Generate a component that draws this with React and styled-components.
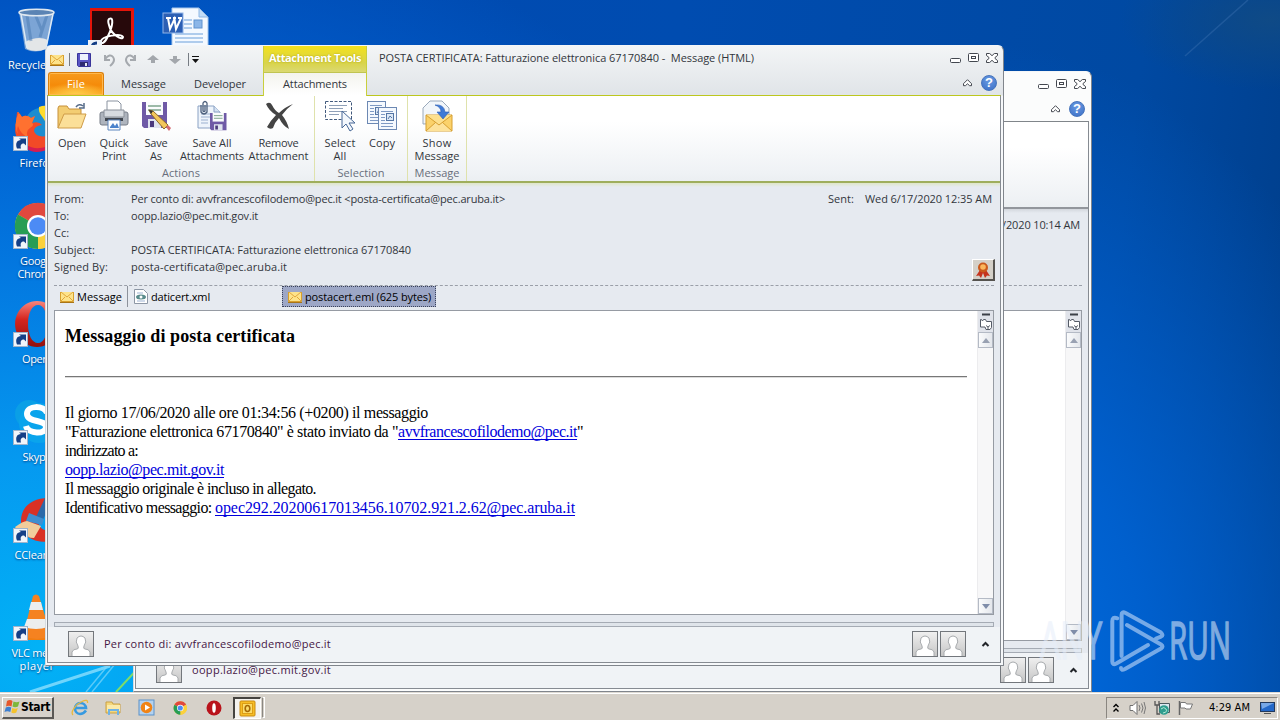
import React, { useLayoutEffect, useRef, useState } from "react";
import styled, { createGlobalStyle, css } from "styled-components";

const ui = `"Open Sans", "Noto Sans", sans-serif`;
const tahoma = `"DejaVu Sans Condensed", "DejaVu Sans", sans-serif`;

const GlobalStyle = createGlobalStyle`
  * { box-sizing: border-box; }
  body { margin: 0; overflow: hidden; font-family: ${ui}; font-size: 11px; color: #32363c; }
  svg { display: block; flex: none; }
`;

/* spreads the letters so that a label takes exactly w pixels */
const FitSpan = styled.span`
    display: inline-block;
    white-space: pre;
`;

const Fit = ({ w, children }) => {
    const ref = useRef(null);
    const [spacing, setSpacing] = useState(0);
    useLayoutEffect(() => {
        const natural = ref.current.getBoundingClientRect().width;
        setSpacing((w - natural) / children.length);
    }, [w, children]);
    return <FitSpan ref={ref} style={{ letterSpacing: `${spacing}px` }}>{children}</FitSpan>;
};

/* ---------- desktop ---------- */

const Desktop = styled.div`
    position: relative;
    width: 1280px;
    height: 720px;
    overflow: hidden;
    display: flex;
    flex-direction: column;
    background:
        radial-gradient(ellipse 900px 760px at 40px 650px, #02b2f6 0%, #0599f0 25%, #0378e0 50%, rgba(0, 98, 212, 0.85) 72%, rgba(0, 80, 180, 0) 100%),
        radial-gradient(ellipse 480px 640px at 960px 680px, #006ee2 0%, rgba(0, 100, 214, 0.85) 40%, rgba(0, 80, 180, 0) 100%),
        radial-gradient(ellipse 150px 70px at 1270px 20px, #0f4a86, rgba(10, 70, 140, 0)),
        linear-gradient(97deg, #0049b4 0%, #004cb0 50%, #0049a2 84%, #003d88 100%);
`;

const Streaks = styled.svg`
    position: absolute;
    left: ${(p) => p.$x}px;
    top: ${(p) => p.$y}px;
`;

const IconGrid = styled.div`
    flex: 1;
    min-height: 0;
    display: grid;
    grid-auto-flow: column;
    grid-template-rows: repeat(7, 98px);
    grid-auto-columns: 74px;
    padding-top: 6px;
`;

const Shortcut = styled.div`
    display: flex;
    flex-direction: column;
    align-items: center;
    grid-column: ${(p) => p.$col || 1};
    color: #fff;
    line-height: 13px;
    text-align: center;
    text-shadow: 0 1px 2px #003a80;
    white-space: pre;
    > span { margin-top: 4px; }
`;

const Arrow = () => (
    <g>
        <rect x="0.5" y="32.5" width="14" height="14" fill="#f1f5fa" stroke="#9fb4cc" />
        <path d="M4 44.500c-2-5 0-8.500 4-8.500L6 34.500h7v7L11 39.500c-3 0-4 2-3 5z" fill="#153f86" />
    </g>
);

const BinIcon = () => (
    <svg width="48" height="48" viewBox="0 0 48 48">
        <path d="M6 6l6 37q10 5 21 0l8-37z" fill="#a5bfda" opacity=".75" />
        <path d="M12 36l2 7q9 4 19 0l2-9q-10-5-23 2z" fill="#e3e6e8" />
        <path d="M14 9l4 26M34 9l-7 22M22 8l7 17" stroke="#4476af" strokeWidth="3" opacity=".45" />
        <path d="M8 8l6 34M40 8l-7 34" stroke="#dce9f5" strokeWidth="1.5" fill="none" />
        <ellipse cx="23.500" cy="6.500" rx="17.500" ry="3.300" fill="#5b84b4" stroke="#dfe8f0" strokeWidth="1.500" />
    </svg>
);

const FirefoxIcon = () => (
    <svg width="48" height="48" viewBox="0 0 48 48">
        <circle cx="28" cy="20" r="16" fill="#1b8dd0" />
        <path d="M26 3c12-5 22 6 22 20H34C32 12 25 12 26 3z" fill="#ffdc2c" />
        <path d="M4 8q3 1 5 5 4-3 9 1l4-2-3 7q7-2 10 2-8 1-8 6 2 7 13 5l14-8c0 15-10 23-23 23C9 47-1 33 3 19z" fill="#f24a27" />
        <path d="M4 8q3 1 5 5 4-3 9 1l4-2-3 7q3 2-2 5-5 3-2 9-7-2-10-11-2 5 1 11-7-12 0-25z" fill="#ff7130" />
        <path d="M6 32c5 13 23 17 36 5-6 13-31 18-36-5z" fill="#d51d52" />
        <Arrow />
    </svg>
);

const ChromeIcon = ({ size = 48, arrow = true }) => (
    <svg width={size} height={size} viewBox="0 0 48 48">
        <circle cx="25" cy="24" r="23" fill="#fbd13c" />
        <path d="M25 24L5 12.500A23 23 0 0 1 45 12.500z" fill="#e0483e" />
        <path d="M25 24L5 12.500A23 23 0 0 0 25 47L36 28z" fill="#279d55" />
        <path d="M25 24l20-11.500A23 23 0 0 1 25 47z" fill="#fbd13c" />
        <circle cx="25" cy="24" r="11" fill="#fff" />
        <circle cx="25" cy="24" r="8.800" fill="#4c8bf5" />
        {arrow && <Arrow />}
    </svg>
);

const OperaIcon = () => (
    <svg width="48" height="48" viewBox="0 0 48 48">
        <defs>
            <linearGradient id="op" x1="0" y1="0" x2="0" y2="1">
                <stop offset="0" stopColor="#f8867c" /><stop offset=".4" stopColor="#d5251f" /><stop offset="1" stopColor="#92100e" />
            </linearGradient>
        </defs>
        <path fillRule="evenodd" d="M24 1a22 23 0 1 0 .1 0zM25 5c6 0 9 8 9 19s-3 19-9 19-10-8-10-19S19 5 25 5z" fill="url(#op)" />
        <Arrow />
    </svg>
);

const SkypeIcon = () => (
    <svg width="48" height="48" viewBox="0 0 48 48">
        <circle cx="16" cy="16" r="14" fill="#0a9fe6" />
        <circle cx="26" cy="25" r="20" fill="#0aa4ec" />
        <path d="M34 15c-3-8-20-8-20 1 0 9 19 5 19 13 0 8-18 7-20-1" fill="none" stroke="#fff" strokeWidth="6" />
        <Arrow />
    </svg>
);

const CCleanerIcon = () => (
    <svg width="48" height="48" viewBox="0 0 48 48">
        <path d="M46 3C22-1 8 9 8 25s14 25 40 19V33c-12 4-23 2-23-9s10-13 21-9z" fill="#d93125" />
        <path d="M33 0L22 23l7 3L40 2z" fill="#2c69a8" />
        <path d="M16 17l15 6-2 6-16-4z" fill="#3f8fd0" />
        <path d="M2 31q8-6 12-6l14 5-7 12q-8 0-6-4-6 1-5-2-5 0-8-5z" fill="#f1cd9b" />
        <Arrow />
    </svg>
);

const VlcIcon = () => (
    <svg width="48" height="48" viewBox="0 0 48 48">
        <path d="M8 34h32l4 12H12z" fill="#f07e12" />
        <path d="M20 2q3-3 6 0l12 40q-14 6-28 0z" fill="#f58220" />
        <path d="M18 8h10l2 8H16zM14 25h19l2 8q-12 4-24 0z" fill="#eceeee" />
        <Arrow />
    </svg>
);

const AcrobatIcon = () => (
    <svg width="48" height="48" viewBox="0 0 48 48">
        <rect x="3" y="2" width="44" height="46" fill="#e4140a" />
        <rect x="5" y="5" width="39" height="43" fill="#27090b" />
        <path d="M22 13c5-3 4 7-1 17-3 7-7 9-7 5 1-5 20-8 22-4 0 4-12-2-14-12-1-3-1-5 0-6z" fill="none" stroke="#fff" strokeWidth="2" />
        <rect x="1" y="34" width="14" height="14" fill="#eef3f9" />
        <path d="M5 45c-1-5 1-8 5-8" stroke="#153f86" strokeWidth="3" fill="none" />
    </svg>
);

const WordIcon = () => (
    <svg width="48" height="48" viewBox="0 0 48 48">
        <path d="M11 2h27l9 9v37H11z" fill="#f4f9ff" stroke="#a8c7ea" />
        <path d="M38 2v9h9z" fill="#c3ddf7" stroke="#8fb7e4" />
        <path d="M23 14h8M23 18h8M23 22h8M14 28h28M14 32h28M14 36h28" stroke="#6a9fda" />
        <rect x="33" y="14" width="8" height="8" fill="#8bb6e8" stroke="#5f93d0" />
        <rect x="2" y="7" width="20" height="20" fill="#2c5fb4" stroke="#8fb4e8" />
        <path d="M5 12h5M12 12h3M17 12h4M7 12l2 11 4.500-10 1.500 10 5-11" fill="none" stroke="#fff" strokeWidth="2" />
    </svg>
);

/* ---------- window ---------- */

const Frame = styled.div`
    position: absolute;
    left: ${(p) => p.$x}px;
    top: ${(p) => p.$y}px;
    width: 959px;
    height: 621px;
    padding: 0 2px 2px 1px;
    background: ${(p) => (p.$active ? "linear-gradient(#f3f5f6, #e0e4e8 49px, #f6f8fa 50px)" : "#fbfcfc")};
    border: 1px solid #80858c;
    border-top-color: #f4f6f8;
    border-left-color: #d5dbe0;
    border-radius: 6px 6px 0 0;
`;

const Inner = styled.div`
    height: 100%;
    display: flex;
    flex-direction: column;
`;

const Pane = styled.div`
    flex: 1;
    min-height: 0;
    display: flex;
    flex-direction: column;
    border: 1px solid #868b92;
    border-top-color: ${(p) => (p.$active ? "#bcc71e" : "#80858a")};
`;

const Chrome = styled.div`
    display: flex;
    height: 49px;
    flex: none;
    padding: 0 1px;
`;

const ChromeLeft = styled.div`
    width: 215px;
    display: flex;
    flex-direction: column;
`;

const QuickAccess = styled.div`
    height: 26px;
    display: flex;
    align-items: center;
    padding-left: 2px;
`;

const QatItem = styled.div`
    width: ${(p) => p.$w || 22}px;
    height: 18px;
    margin-top: 1px;
    display: flex;
    align-items: center;
    justify-content: ${(p) => (p.$start ? "flex-start" : "center")};
`;

const QatRule = styled.div`
    width: 1px;
    height: 13px;
    margin-top: 1px;
    background: #777c83;
`;

const TabRow = styled.div`
    display: flex;
    height: 23px;
    line-height: 22px;
    text-align: center;
`;

const Tab = styled.div`
    width: ${(p) => p.$w}px;
    padding-top: 1px;
    height: 23px;
    ${(p) => p.$file && css`
        color: #fff;
        border: 1px solid #d97f0c;
        border-bottom: 0;
        border-radius: 3px 3px 0 0;
        line-height: 20px;
        background: radial-gradient(ellipse 30px 13px at 50% 100%, #ffcf4d, rgba(255, 175, 40, 0)), linear-gradient(#f79a1c, #f58b0a 55%, #fbac26);
        box-shadow: inset 0 0 0 1px #ffb84e;
    `}
`;

/* hangs one pixel over the pane, so the pane's top line stops under it */
const ContextTab = styled.div`
    position: relative;
    width: 104px;
    height: 50px;
    flex: none;
    text-align: center;
    border: solid #c9cf3d;
    border-width: 0 1px;
    background: #fff;
`;

const ContextHead = styled.div`
    height: 27px;
    line-height: 23px;
    color: #fff;
    font-weight: 700;
    text-shadow: 0 0 2px #a39a00;
    background: linear-gradient(#f3e11c, #d9d44a 65%, #dbd972);
    border-bottom: 1px solid #c0c452;
`;

const ContextLabel = styled.div`
    line-height: 22px;
    background: linear-gradient(#f4f4ee, #fff);
`;

const ChromeRight = styled.div`
    flex: 1;
    display: flex;
    flex-direction: column;
    justify-content: space-between;
`;

const TitleLine = styled.div`
    display: flex;
    justify-content: space-between;
    align-items: center;
    height: 23px;
    padding: 0 2px 0 12px;
`;

const Buttons = styled.div`
    display: flex;
    align-items: center;
    gap: ${(p) => p.$gap || 7}px;
`;

const HelpLine = styled.div`
    display: flex;
    justify-content: flex-end;
    padding: 0 3px 4px 0;
`;

const HelpBall = styled.div`
    width: 16px;
    height: 16px;
    border-radius: 50%;
    background: radial-gradient(circle at 50% 30%, #6a9be2, #3a6ec6);
    border: 1px solid #4674bc;
    color: #fff;
    font: 700 13px/14px "Liberation Sans", sans-serif;
    text-align: center;
`;

const Ribbon = styled.div`
    flex: none;
    height: 87px;
    display: flex;
    background: linear-gradient(#fff 30%, #eff2f5 90%, #ebeff2);
    border-bottom: 2px solid ${(p) => (p.$active ? "#9fae5c" : "#92969c")};
`;

const Group = styled.div`
    display: flex;
    flex-direction: column;
    justify-content: space-between;
    width: ${(p) => p.$w}px;
    border-right: 1px solid #dfe2ac;
    padding: 4px 0 0 ${(p) => p.$pad}px;
`;

const GroupButtons = styled.div`
    display: flex;
`;

const GroupLabel = styled.div`
    text-align: center;
    color: #686e7b;
    line-height: 16px;
    margin-left: -${(p) => p.$pad}px;
`;

const RibbonButton = styled.div`
    width: ${(p) => p.$w}px;
    display: flex;
    flex-direction: column;
    align-items: center;
    line-height: 13px;
    svg { margin-bottom: 4px; }
`;

const Headers = styled.div`
    flex: none;
    height: ${(p) => (p.$short ? 77 : 103)}px;
    margin: 0 6px;
    padding-top: 8px;
    display: flex;
    justify-content: space-between;
    border-bottom: 1px dashed #9a9fa8;
`;

const Fields = styled.div`
    display: grid;
    grid-template-columns: 77px auto;
    grid-auto-rows: 17px;
    line-height: 16px;
`;

const SentColumn = styled.div`
    display: flex;
    flex-direction: column;
    justify-content: space-between;
    align-items: flex-end;
    line-height: 16px;
    padding-bottom: 4px;
    white-space: pre;
`;

const SentLine = styled.div`
    display: flex;
    gap: 11px;
    padding-right: 2px;
`;

const SealButton = styled.div`
    width: 23px;
    height: 22px;
    margin-right: -1px;
    display: flex;
    align-items: center;
    justify-content: center;
    background: #d4d0c8;
    border: 1px solid #fff;
    border-right: 2px solid #55534f;
    border-bottom: 2px solid #55534f;
`;

const Mail = styled.div`
    flex: 1;
    min-height: 0;
    display: flex;
    flex-direction: column;
    background: linear-gradient(${(p) => (p.$active ? "#dfe6c8" : "#d3d7dd")}, #e6eaf0 4px);
`;

const FileTabs = styled.div`
    flex: none;
    display: flex;
    height: 24px;
    padding-left: 6px;
    color: #000;
`;

const FileTab = styled.div`
    display: flex;
    align-items: center;
    gap: 3px;
    width: ${(p) => p.$w}px;
    height: 21px;
    padding-left: 6px;
    ${(p) => p.$ruled && css`border-right: 1px solid #8d929b;`}
    ${(p) => p.$selected && css`
        background: #9da7c6;
        outline: 1px dotted #3c435a;
        outline-offset: -1px;
    `}
    span { margin-bottom: 1px; }
`;

const Reader = styled.div`
    flex: 1;
    display: flex;
    margin: 0 6px;
    background: #fff;
    border: 1px solid #969ba3;
`;

const Letter = styled.div`
    flex: 1;
    padding: 14px 10px 0 10px;
    font: 16px/19px "Liberation Serif", "Times New Roman", serif;
    color: #000;
`;

const LetterTitle = styled.div`
    font-size: 18px;
    line-height: 22px;
    font-weight: 700;
`;

const Rule = styled.div`
    height: 2px;
    margin: 29px 0 25px;
    border-top: 1px solid #777;
    border-bottom: 1px solid #dcdcdc;
`;

const Link = styled.span`
    color: #0000dc;
    span {
        text-decoration: underline;
        text-decoration-thickness: 1px;
        text-underline-offset: 2px;
        text-decoration-skip-ink: none;
    }
`;

const ScrollTrack = styled.div`
    width: 16px;
    display: flex;
    flex-direction: column;
    align-items: center;
    justify-content: space-between;
    background: #f7f7f8;
    border-left: 1px solid #ececee;
`;

const TrackTop = styled.div`
    display: flex;
    flex-direction: column;
    align-items: center;
    background: #e0e3ea;
`;

const ArrowButton = styled.div`
    width: 15px;
    height: 16px;
    display: flex;
    align-items: center;
    justify-content: center;
    border: 1px solid #b4bac5;
    background: linear-gradient(90deg, #fafbfc, #e4e7ec);
`;

const Splitter = styled.div`
    flex: none;
    height: 5px;
    margin: 7px 6px 0;
    border: 1px solid #a5abb4;
    background: #dfe4ea;
`;

const People = styled.div`
    flex: none;
    display: flex;
    justify-content: space-between;
    align-items: center;
    height: 35px;
    padding: 0 10px 1px 20px;
    background: #f0f3f6;
    color: #451645;
`;

const PeopleSide = styled.div`
    display: flex;
    align-items: center;
    gap: ${(p) => p.$gap}px;
    span { margin-bottom: 2px; }
`;

const Avatar = () => (
    <svg width="26" height="26" viewBox="0 0 26 26">
        <defs>
            <linearGradient id="av" x1="0" y1="0" x2="0" y2="1"><stop offset="0" stopColor="#f0f0f0" /><stop offset="1" stopColor="#c5c5c5" /></linearGradient>
        </defs>
        <rect x=".5" y=".5" width="25" height="25" fill="url(#av)" stroke="#73777c" />
        <path d="M4 25v-4q1-3 5-3 2 0 1-3-3-4-1-8 4-4 8 0 2 4-1 8-1 3 1 3 4 0 5 3v4" fill="#fff" stroke="#a8abae" />
    </svg>
);

const Envelope = () => (
    <svg width="14" height="12" viewBox="0 0 14 12">
        <path d="M1 1h12v9H1z" fill="#fde38a" />
        <path d="M.5 1v9.500h13V1" fill="none" stroke="#d8a02c" />
        <path d="M1 1l6 5 6-5M1 10l4-4M13 10L9 6" fill="none" stroke="#e0a53a" />
        <path d="M0 11.500h14" stroke="#a87518" />
    </svg>
);

const MinIcon = () => (
    <svg width="11" height="12"><rect x=".5" y="6.500" width="10" height="4" rx="1" fill="#fff" stroke="#43474f" /></svg>
);
const MaxIcon = () => (
    <svg width="11" height="10"><rect x=".5" y=".5" width="10" height="8" rx="1" fill="#fff" stroke="#43474f" /><rect x="3.500" y="3.500" width="4" height="2" fill="none" stroke="#43474f" /></svg>
);
const CloseIcon = () => (
    <svg width="12" height="10" viewBox="0 0 12 10">
        <path d="M.5.500h3.200L6 2.700 8.300.500h3.200v2L9 4.500v1l2.500 2v2H8.300L6 7.300 3.700 9.500H.500v-2L3 5.500v-1L.500 2.500z" fill="#fff" stroke="#43474f" />
    </svg>
);
const CollapseIcon = () => (
    <svg width="9" height="8" viewBox="0 0 9 8"><path d="M4.500.7l4 4v2H6.600L4.500 4.800 2.400 6.700H.5v-2z" fill="#fff" stroke="#43474f" /></svg>
);
const CaretIcon = () => (
    <svg width="9" height="6" viewBox="0 0 9 6"><path d="M1.500 5l3-3 3 3" fill="none" stroke="#22252a" strokeWidth="2" /></svg>
);
const SealIcon = () => (
    <svg width="18" height="18" viewBox="0 0 18 18">
        <path d="M6 9l-4 6 3-.5L7 17l2-5 2 5 2-2.500 3 .5-4-6z" fill="#c5331c" />
        <circle cx="9" cy="6.500" r="5" fill="#ca5a1c" />
        <circle cx="9" cy="6" r="2.800" fill="#fbb75c" />
    </svg>
);
const BrowseIcon = () => (
    <svg width="14" height="15" viewBox="0 0 14 15">
        <path d="M1.500 2.500h1l1 1.500 1-1.500h2l1 2h5v6l-1.500 2h-4l-1-2.500h-4.500z" fill="#fff" stroke="#555b66" />
        <path d="M7 8.500l2 1.500 2-1.500M9 10v3" stroke="#555b66" fill="none" />
    </svg>
);

const Floppy = ({ x = 0, y = 0, s = 1 }) => (
    <g transform={`translate(${x} ${y}) scale(${s})`}>
        <path d="M0 0h25v26H2l-2-2z" fill="#6f5aa6" />
        <path d="M4 0h17v13H4z" fill="#fafcfd" />
        <path d="M6 4h13M6 8h13" stroke="#7da48c" strokeWidth="1.500" />
        <path d="M6 17h13v9H6z" fill="#dfe3ee" /><path d="M8 19h4v6H8z" fill="#4b3a7c" />
    </g>
);

const SmallFloppy = () => (
    <svg width="14" height="14" viewBox="0 0 14 14">
        <path d="M.5.500h13v13h-12l-1-1z" fill="#5a55c4" stroke="#39349a" />
        <path d="M3 1h8v6H3z" fill="#eef3fd" /><path d="M3 9h8v4H3z" fill="#2e2a70" /><path d="M8 10h2v3H8z" fill="#e6e8f4" />
    </svg>
);

const OpenIcon = () => (
    <svg width="32" height="32" viewBox="0 0 32 32">
        <path d="M2 28V8l1-2h8l2 3h12v5" fill="#f3cd72" stroke="#c7913a" />
        <path d="M2 28l6-14h22l-5 14z" fill="#fbdf98" stroke="#cf9c48" />
        <path d="M20 7q3-4 7-1M28 3v5h-5" fill="none" stroke="#566b88" strokeWidth="1.500" />
    </svg>
);
const PrintIcon = () => (
    <svg width="32" height="32" viewBox="0 0 32 32">
        <path d="M9 12V1h11l3 3v8" fill="#fff" stroke="#8a93a0" />
        <path d="M4 12h24q2 0 2 2v9q0 2-2 2H4q-2 0-2-2v-9q0-2 2-2z" fill="#aeb4bd" stroke="#767d87" />
        <path d="M6 10h20v7H6z" fill="#d7dbe0" stroke="#8a9099" /><path d="M7 18h18v3H7z" fill="#40464f" />
        <path d="M10 20h12v10H10z" fill="#fff" stroke="#5c85bd" /><path d="M12 27l3-4 2 3 2-3 2 5h-9z" fill="#4c83cc" />
    </svg>
);
const SaveAsIcon = () => (
    <svg width="32" height="32" viewBox="0 0 32 32">
        <Floppy x={2} y={2} />
        <path d="M9 10l4 1 15 14-4 4L11 14z" fill="#f3c65b" stroke="#8f6a29" /><path d="M9 10l4 1-2 3z" fill="#333" />
        <path d="M26 27l2-2 3 3-2 3z" fill="#d66a70" />
    </svg>
);
const SaveAllIcon = () => (
    <svg width="32" height="32" viewBox="0 0 32 32">
        <path d="M2 6h16l6 6v16H2z" fill="#eef4fb" stroke="#8ba2c4" /><path d="M18 6v6h6" fill="#d5e2f2" stroke="#8ba2c4" />
        <path d="M5 14h9M5 17h9M5 20h7M5 23h7" stroke="#9bb0cf" />
        <path d="M5 5v7q3 4 6 0V3q-2-3-4 0v8q1 1 2 0V5" fill="none" stroke="#4d607c" strokeWidth="1.300" />
        <Floppy x={14} y={13} s={0.66} />
    </svg>
);
const RemoveIcon = () => (
    <svg width="32" height="32" viewBox="0 0 32 32">
        <path d="M3 4q4-3 6 1 3 6 7 8 6-6 14-9-7 5-11 11 5 6 7 14-6-3-10-11-4 4-6 10-3 2-6-1 4-7 9-12Q6 11 3 4z" fill="#444" />
    </svg>
);
const SelectIcon = () => (
    <svg width="32" height="32" viewBox="0 0 32 32">
        <path d="M1.500 1.500h26v18h-26z" fill="none" stroke="#425a7d" strokeDasharray="3 1.500" />
        <path d="M5 5.500h18M5 8.500h14M5 11.500h18M5 14.500h10" stroke="#8fa0b8" />
        <path d="M18 11v17l4-4 4 7 3-2-4-6h6z" fill="#f3f7fc" stroke="#466796" />
    </svg>
);
const Sheet = ({ x, y }) => (
    <g transform={`translate(${x} ${y})`}>
        <rect x=".5" y=".5" width="18" height="22" fill="#f5f9fe" stroke="#6c88b3" />
        <path d="M3 4.500h12M3 7.500h4M3 10.500h4M3 13.500h4M3 16.500h12M3 19.500h12" stroke="#7f9ac4" />
        <rect x="8.500" y="6.500" width="7" height="7" fill="#dce8f6" stroke="#5576a5" /><path d="M10 12l2-3 2 2" stroke="#5576a5" fill="none" />
    </g>
);
const CopyIcon = () => (
    <svg width="32" height="32" viewBox="0 0 32 32"><Sheet x={1} y={1} /><Sheet x={12} y={7} /></svg>
);
const ShowIcon = () => (
    <svg width="32" height="32" viewBox="0 0 32 32">
        <path d="M2 24V8l7-7h12l7 7v15z" fill="#f2f6fa" stroke="#9aa9bb" />
        <path d="M5 15h26v16H5z" fill="#fbd26b" stroke="#d69f31" /><path d="M5 31l10-9h6l10 9" fill="#fde29a" stroke="#d69f31" />
        <path d="M5 15l13 10 13-10" fill="#fde08e" stroke="#d69f31" />
        <path d="M14 5q9-1 10 7h4l-6 7-6-7h4q0-5-6-7z" fill="#3f7ad6" stroke="#2a5db4" strokeWidth=".6" />
    </svg>
);

const Undo = ({ flip }) => (
    <svg width="14" height="14" viewBox="0 0 14 14">
        <path transform={flip ? "matrix(-1 0 0 1 14 0)" : undefined} d="M3 2v5h5M3 6q5-6 8-2t-3 9" fill="none" stroke="#a5a9ae" strokeWidth="2" />
    </svg>
);
const Arrowhead = ({ down }) => (
    <svg width="12" height="9" viewBox="0 0 12 9">
        <path transform={down ? "matrix(1 0 0 -1 0 9)" : undefined} d="M6 0l6 5H8v3H4V5H0z" fill="#a3a7ac" />
    </svg>
);

const Win = ({ x, y, active, chromeLeft, title, ribbon, fields, sent, files, children, from }) => (
    <Frame $x={x} $y={y} $active={active}>
        <Inner>
            <Chrome>
                {chromeLeft}
                <ChromeRight>
                    <TitleLine>
                        <span>{title}</span>
                        <Buttons><MinIcon /><MaxIcon /><CloseIcon /></Buttons>
                    </TitleLine>
                    <HelpLine>
                        <Buttons $gap={9}><CollapseIcon /><HelpBall>?</HelpBall></Buttons>
                    </HelpLine>
                </ChromeRight>
            </Chrome>
            <Pane $active={active}>
                <Ribbon $active={active}>{ribbon}</Ribbon>
                <Mail $active={active}>
                    <Headers $short={!active}>
                        <Fields>{fields}</Fields>
                        <SentColumn>
                            {sent}
                            {active && <SealButton><SealIcon /></SealButton>}
                        </SentColumn>
                    </Headers>
                    <FileTabs>{files}</FileTabs>
                    <Reader>
                        <Letter>{children}</Letter>
                        <ScrollTrack>
                            <TrackTop>
                                <svg width="15" height="6"><path d="M4 3.500h8" stroke="#3b3f47" strokeWidth="2" /></svg>
                                <BrowseIcon />
                                <ArrowButton><svg width="8" height="5"><path d="M0 5l4-5 4 5z" fill="#99a1b2" /></svg></ArrowButton>
                            </TrackTop>
                            <ArrowButton><svg width="8" height="5"><path d="M0 0l4 5 4-5z" fill="#7f8da9" /></svg></ArrowButton>
                        </ScrollTrack>
                    </Reader>
                    <Splitter />
                    <People>
                        <PeopleSide $gap={10}><Avatar />{from}</PeopleSide>
                        <PeopleSide $gap={2}><Avatar /><Avatar /><svg width="11" height="1" /><CaretIcon /></PeopleSide>
                    </People>
                </Mail>
            </Pane>
        </Inner>
    </Frame>
);

const actions = [
    { w: 42, icon: <OpenIcon />, lines: [["Open", 28]] },
    { w: 42, icon: <PrintIcon />, lines: [["Quick", 29], ["Print", 24]] },
    { w: 42, icon: <SaveAsIcon />, lines: [["Save", 23], ["As", 12]] },
    { w: 70, icon: <SaveAllIcon />, lines: [["Save All", 39], ["Attachments", 64]] },
    { w: 63, icon: <RemoveIcon />, lines: [["Remove", 40], ["Attachment", 60]] },
];
const selection = [
    { w: 42, icon: <SelectIcon />, lines: [["Select", 31], ["All", 13]] },
    { w: 42, icon: <CopyIcon />, lines: [["Copy", 26]] },
];
const message = [{ w: 56, icon: <ShowIcon />, lines: [["Show", 29], ["Message", 45]] }];

const RibbonGroup = ({ w, pad, name, nameWidth, items }) => (
    <Group $w={w} $pad={pad}>
        <GroupButtons>
            {items.map((b, i) => (
                <RibbonButton key={i} $w={b.w}>
                    {b.icon}
                    {b.lines.map(([t, tw]) => <Fit key={t} w={tw}>{t}</Fit>)}
                </RibbonButton>
            ))}
        </GroupButtons>
        <GroupLabel $pad={pad}><Fit w={nameWidth}>{name}</Fit></GroupLabel>
    </Group>
);

const headerFields = [
    ["From:", 30, "Per conto di: avvfrancescofilodemo@pec.it <posta-certificata@pec.aruba.it>", 374],
    ["To:", 15, "oopp.lazio@pec.mit.gov.it", 127],
    ["Cc:", 15, "", 0],
    ["Subject:", 41, "POSTA CERTIFICATA: Fatturazione elettronica 67170840", 280],
    ["Signed By:", 54, "posta-certificata@pec.aruba.it", 156],
];

/* ---------- taskbar ---------- */

const Taskbar = styled.div`
    position: relative;
    height: 28px;
    flex: none;
    display: flex;
    align-items: center;
    justify-content: space-between;
    padding: 3px 2px 1px;
    background: #d6d1c9;
    border-top: 1px solid #dedad3;
    box-shadow: inset 0 1px #fff;
    font-family: ${tahoma};
    color: #000;
`;

const TaskLeft = styled.div`
    display: flex;
    align-items: center;
`;

const StartButton = styled.div`
    width: 52px;
    height: 22px;
    display: flex;
    align-items: center;
    padding-left: 1px;
    font-size: 12px;
    font-weight: 700;
    border: 1px solid #fff;
    border-right: 2px solid #5a5854;
    border-bottom: 2px solid #5a5854;
    margin-right: 9px;
`;

const TaskItem = styled.div`
    width: 33.500px;
    height: 22px;
    display: flex;
    align-items: center;
    justify-content: center;
    ${(p) => p.$on && css`
        width: 28px;
        margin-left: 2px;
        background: #f4f2ee;
        border: 1px solid #fff;
        border-top: 2px solid #45433f;
        border-left: 2px solid #45433f;
    `}
`;

const TaskSplit = styled.div`
    width: 3px;
    height: 21px;
    border: 1px solid #fff;
    border-left-color: #8a8782;
    margin-left: 1px;
`;

const Tray = styled.div`
    width: 172px;
    height: 22px;
    display: flex;
    align-items: center;
    padding-left: 5px;
    border: 1px solid #8a8680;
    border-right-color: #fff;
    border-bottom-color: #fff;
    svg { margin-right: 8px; }
    svg:last-child { margin-right: 1px; }
`;

const WinFlag = () => (
    <svg width="17" height="16" viewBox="0 0 17 16">
        <path d="M3 2q3-2 5.500 0L7.500 7.500Q5 6 2 7.500z" fill="#e5572b" /><path d="M9.500 2.500q3 1.500 6 0l-1.500 5q-3 1.500-5.500 0z" fill="#7db73a" />
        <path d="M1.800 8.500q3-1.500 5.500 0L6.300 13q-3-1.500-5.800 0z" fill="#3c7fd0" /><path d="M8.300 9q3 1.500 5.500 0l-1.500 4.500q-2.500 1.500-5 0z" fill="#f5c32c" />
    </svg>
);
const IeIcon = () => (
    <svg width="18" height="17" viewBox="0 0 18 17">
        <path d="M15 11.500Q12.500 15 9 15a5.500 5.500 0 1 1 6-6H5" fill="none" stroke="#379ae0" strokeWidth="2.600" />
        <path d="M2 16C-1 13 5 5 11 2.500 15 .500 17 1 16.500 4" fill="none" stroke="#e9b93c" strokeWidth="1.300" />
    </svg>
);
const FolderIcon = () => (
    <svg width="17" height="16" viewBox="0 0 17 16">
        <path d="M1 2h6l1 2h7v9H1z" fill="#f4d77b" stroke="#c9a044" /><path d="M2 5h13v6H2z" fill="#fbeaa9" />
        <path d="M4 15v-5h9v5" fill="none" stroke="#70b3e4" strokeWidth="2" />
    </svg>
);
const MediaIcon = () => (
    <svg width="17" height="17" viewBox="0 0 17 17">
        <rect x="1" y="1" width="15" height="15" fill="#b4d2ef" stroke="#5a92c9" /><circle cx="8.500" cy="8.500" r="5.800" fill="#f08417" />
        <path d="M7 5.500l5 3-5 3z" fill="#fff" />
    </svg>
);
const OperaBall = () => (
    <svg width="16" height="16" viewBox="0 0 16 16"><circle cx="8" cy="8" r="7.500" fill="#b9131b" /><ellipse cx="8" cy="8" rx="1.800" ry="4.800" fill="#fff" /></svg>
);
const OutlookIcon = () => (
    <svg width="17" height="17" viewBox="0 0 17 17">
        <rect x="1" y="1" width="15" height="15" rx="1" fill="#f6bd25" stroke="#c98a10" /><rect x="3.500" y="3.500" width="10" height="10" fill="#fbdc6a" stroke="#dd9d14" />
        <ellipse cx="8.500" cy="8.500" rx="2.300" ry="3" fill="none" stroke="#a66a05" strokeWidth="1.600" />
    </svg>
);
const TrayIcons = () => (
    <>
        <svg width="9" height="12"><path d="M1.500 5L4 2.500 6.500 5M1.500 9.500L4 7l2.500 2.500" fill="none" stroke="#000" strokeWidth="1.400" /></svg>
        <svg width="17" height="16"><path d="M1 5.500h3l4-4v13l-4-4H1z" fill="#fff" stroke="#6f6f6f" /><path d="M10 5q2 3 0 6M12.500 3.500q3 4.500 0 9M15 2q3 6 0 12" fill="none" stroke="#777" /></svg>
        <svg width="16" height="16"><path d="M5.500 3.500h10v9h-10z" fill="#dce8ee" stroke="#4d5a60" /><circle cx="10" cy="10" r="4.800" fill="#2f9d8e" /><path d="M7 9q3-3 5 0t-3 4" stroke="#b8ead6" fill="none" /><path d="M1 1v4h4V1M3 5v9h3" fill="none" stroke="#555" strokeWidth="1.300" /></svg>
        <svg width="17" height="16"><path d="M1.500 1v14" stroke="#666" strokeWidth="1.500" /><path d="M2.500 2.500h5l1 1.500h6l-2 5H8L7 8H2.500z" fill="#fff" stroke="#777" /></svg>
    </>
);

const Clock = styled.span`
    flex: 1;
    padding-left: 6px;
    white-space: nowrap;
`;

const Watermark = styled.svg`
    position: absolute;
    left: 1036px;
    top: 604px;
    overflow: visible;
    text {
        font-family: "Open Sans", sans-serif;
        font-size: 51px;
        stroke-width: 1.5px;
    }
`;

const App = () => (
    <>
        <GlobalStyle />
        <Desktop>
            <Streaks $x={0} $y={640} width="200" height="52">
                <path d="M30 52L110 26" stroke="#9fe6ff" strokeWidth="3" opacity=".7" />
                <path d="M86 52l28-34M92 52l28-34" stroke="#7fd8fb" strokeWidth="1.500" opacity=".7" />
                <path d="M116 52l28-30" stroke="#7fdc69" strokeWidth="2" />
            </Streaks>
            <Streaks $x={1180} $y={0} width="100" height="70">
                <path d="M5 56L68 0" stroke="#3f74b4" strokeWidth="1.500" opacity=".4" />
            </Streaks>
            <IconGrid>
                <Shortcut><BinIcon /><span><Fit w={58}>Recycle Bin</Fit></span></Shortcut>
                <Shortcut><FirefoxIcon /><span><Fit w={35}>Firefox</Fit></span></Shortcut>
                <Shortcut><ChromeIcon /><span><Fit w={34}>Google</Fit>{"\n"}<Fit w={39}>Chrome</Fit></span></Shortcut>
                <Shortcut><OperaIcon /><span><Fit w={30}>Opera</Fit></span></Shortcut>
                <Shortcut><SkypeIcon /><span><Fit w={29}>Skype</Fit></span></Shortcut>
                <Shortcut><CCleanerIcon /><span><Fit w={45}>CCleaner</Fit></span></Shortcut>
                <Shortcut><VlcIcon /><span><Fit w={51}>VLC media</Fit>{"\n"}<Fit w={35}>player</Fit></span></Shortcut>
                <Shortcut $col={2}><AcrobatIcon /></Shortcut>
                <Shortcut $col={3}><WordIcon /></Shortcut>
            </IconGrid>
            <Taskbar>
                <TaskLeft>
                    <StartButton><WinFlag /><Fit w={29}>Start</Fit></StartButton>
                    <TaskItem><IeIcon /></TaskItem>
                    <TaskItem><FolderIcon /></TaskItem>
                    <TaskItem><MediaIcon /></TaskItem>
                    <TaskItem><ChromeIcon size={14} arrow={false} /></TaskItem>
                    <TaskItem><OperaBall /></TaskItem>
                    <TaskItem $on><OutlookIcon /></TaskItem>
                    <TaskSplit />
                </TaskLeft>
                <Tray>
                    <TrayIcons />
                    <Clock><Fit w={41}>4:29 AM</Fit></Clock>
                    <svg width="16" height="14"><rect x=".5" y="1.500" width="14" height="9" fill="#2468c8" stroke="#23395c" /><path d="M1 2h13L2 8z" fill="#78a8e6" /><path d="M4 12.500h7" stroke="#555" /></svg>
                </Tray>
            </Taskbar>

            <Win
                x={133}
                y={71}
                sent={<SentLine><Fit w={78}>/2020 10:14 AM</Fit></SentLine>}
                from={<Fit w={139}>oopp.lazio@pec.mit.gov.it</Fit>}
            />

            <Win
                x={45}
                y={45}
                active
                chromeLeft={
                    <>
                        <ChromeLeft>
                            <QuickAccess>
                                <QatItem $w={19} $start><Envelope /></QatItem>
                                <QatRule />
                                <QatItem $w={28}><SmallFloppy /></QatItem>
                                <QatItem><Undo /></QatItem>
                                <QatItem><Undo flip /></QatItem>
                                <QatItem><Arrowhead /></QatItem>
                                <QatItem><Arrowhead down /></QatItem>
                                <QatItem $w={2} />
                                <QatRule />
                                <QatItem $w={13}><svg width="7" height="8"><path d="M0 .5h7" stroke="#111" /><path d="M0 3h7L3.500 7z" fill="#111" /></svg></QatItem>
                            </QuickAccess>
                            <TabRow>
                                <Tab $w={56} $file><Fit w={18}>File</Fit></Tab>
                                <Tab $w={79}><Fit w={45}>Message</Fit></Tab>
                                <Tab $w={74}><Fit w={52}>Developer</Fit></Tab>
                            </TabRow>
                        </ChromeLeft>
                        <ContextTab>
                            <ContextHead><Fit w={92}>Attachment Tools</Fit></ContextHead>
                            <ContextLabel><Fit w={64}>Attachments</Fit></ContextLabel>
                        </ContextTab>
                    </>
                }
                title={<Fit w={375}>POSTA CERTIFICATA: Fatturazione elettronica 67170840 -  Message (HTML)</Fit>}
                ribbon={
                    <>
                        <RibbonGroup w={267} pad={3} name="Actions" nameWidth={38} items={actions} />
                        <RibbonGroup w={93} pad={4} name="Selection" nameWidth={47} items={selection} />
                        <RibbonGroup w={59} pad={1} name="Message" nameWidth={45} items={message} />
                    </>
                }
                fields={headerFields.map(([k, kw, v, vw]) => (
                    <React.Fragment key={k}>
                        <span><Fit w={kw}>{k}</Fit></span>
                        <span>{v && <Fit w={vw}>{v}</Fit>}</span>
                    </React.Fragment>
                ))}
                sent={<SentLine><Fit w={26}>Sent:</Fit><Fit w={127}>Wed 6/17/2020 12:35 AM</Fit></SentLine>}
                files={
                    <>
                        <FileTab $w={74} $ruled><Envelope /><Fit w={45}>Message</Fit></FileTab>
                        <FileTab $w={154}>
                            <svg width="14" height="15"><path d="M.5.500h9l4 4v10H.500z" fill="#fff" stroke="#8d97a5" /><path d="M3 4h6M3 12h8" stroke="#9fb4d3" /><ellipse cx="7" cy="8" rx="5" ry="2.500" fill="#5a8c8c" /><circle cx="7" cy="8" r="1.500" fill="#fff" /></svg>
                            <Fit w={59}>daticert.xml</Fit>
                        </FileTab>
                        <FileTab $w={154} $selected><Envelope /><Fit w={126}>postacert.eml (625 bytes)</Fit></FileTab>
                    </>
                }
                from={<Fit w={227}>Per conto di: avvfrancescofilodemo@pec.it</Fit>}
            >
                <LetterTitle><Fit w={230}>Messaggio di posta certificata</Fit></LetterTitle>
                <Rule />
                <div><Fit w={363}>Il giorno 17/06/2020 alle ore 01:34:56 (+0200) il messaggio</Fit></div>
                <div><Fit w={333}>{'"Fatturazione elettronica 67170840" è stato inviato da "'}</Fit><Link><Fit w={179}>avvfrancescofilodemo@pec.it</Fit></Link><Fit w={5}>{'"'}</Fit></div>
                <div><Fit w={73}>indirizzato a:</Fit></div>
                <div><Link><Fit w={159}>oopp.lazio@pec.mit.gov.it</Fit></Link></div>
                <div><Fit w={251}>Il messaggio originale è incluso in allegato.</Fit></div>
                <div><Fit w={150}>Identificativo messaggio: </Fit><Link><Fit w={360}>opec292.20200617013456.10702.921.2.62@pec.aruba.it</Fit></Link></div>
            </Win>

            <Watermark width="220" height="80">
                <g fill="#e6eefa" stroke="#e6eefa" opacity=".55">
                    <text x="4" y="55" textLength="62" lengthAdjust="spacingAndGlyphs">ANY</text>
                    <text x="133" y="55" textLength="62" lengthAdjust="spacingAndGlyphs">RUN</text>
                </g>
                <g fill="none" stroke="#b5d2f6" strokeWidth="4" strokeLinejoin="round" strokeLinecap="round" opacity=".65">
                    <path d="M81.300 14.300q-5-2-5 3V57.500q0 4 4 2L112 41" />
                    <path d="M85.600 52V11q0-4 4-2L125 28.600q3 3 0 4l-5 2" />
                    <path d="M91 21l34 19.500q3 2 0 4L89 65q-4 2-4-1" />
                </g>
            </Watermark>
        </Desktop>
    </>
);

export default App;
